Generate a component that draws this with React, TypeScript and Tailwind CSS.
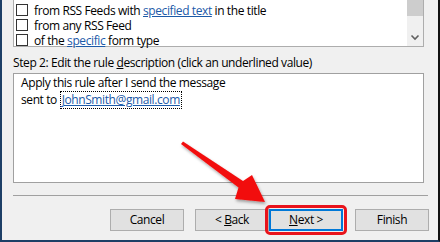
import React from 'react';

const font = { fontFamily: '"Open Sans", "Noto Sans", sans-serif' };

const conditions: { pre: string; link?: string; post?: string }[] = [
  { pre: 'from RSS Feeds with ', link: 'specified text', post: ' in the title' },
  { pre: 'from any RSS Feed' },
  { pre: 'of the ', link: 'specific', post: ' form type' },
];

const Btn = ({ children, focused }: { children: React.ReactNode; focused?: boolean }) => (
  <div
    className={
      'w-[74px] h-[22px] flex items-center justify-center bg-[#e1e1e1] text-[12px] text-black ' +
      (focused ? 'border-2 border-[#0078d7]' : 'border border-[#adadad]')
    }
  >
    {children}
  </div>
);

export default function App() {
  return (
    <div
      className="relative w-[440px] h-[242px] overflow-hidden bg-[#f0f0f0] border-l-2 border-b-2 border-l-[#1d3f66] border-b-[#1d3f66] border-r-2 border-r-[#111] flex flex-col tracking-[-0.4px]"
      style={font}
    >
      {/* Step 1 list (scrolled) */}
      <div className="ml-[11px] mr-[14px] h-[47px] bg-white border-x border-b border-[#adadad] flex">
        <div className="flex-1 flex flex-col pt-[2px]">
          {conditions.map((c, i) => (
            <div key={i} className="h-[15px] flex items-center text-[12px] text-black">
              <div className="w-[12px] h-[12px] ml-[2px] mr-[6px] border border-[#333] bg-white shrink-0" />
              <span className="block h-[15px] leading-[15px] translate-y-[1px]">
                {c.pre}
                {c.link && <span className="text-[#1c5aa8] underline">{c.link}</span>}
                {c.post}
              </span>
            </div>
          ))}
        </div>
        <div className="w-[16px] bg-[#f0f0f0] flex flex-col justify-between">
          <div className="h-[16px] bg-[#cdcdcd]" />
          <svg width="16" height="14" viewBox="0 0 16 14" className="mb-[1px]">
            <path d="M4.5 4.5 L8 8 L11.5 4.5" fill="none" stroke="#606060" strokeWidth="1.6" />
          </svg>
        </div>
      </div>

      {/* Step 2 */}
      <div className="ml-[11px] mt-[8px] text-[12px] text-black leading-[16px]">
        Step 2: Edit the rule <span className="underline">d</span>escription (click an underlined value)
      </div>
      <div className="ml-[11px] mr-[14px] mt-[2px] h-[110px] bg-white border border-[#a0a0a0] pl-[7px] pt-[1px] text-[12px] text-black leading-[16px]">
        <div>Apply this rule after I send the message</div>
        <div className="flex items-center">
          <span>sent to&nbsp;</span>
          <span className="border border-dotted border-black px-[1px] text-[#1c5aa8] underline">JohnSmith@gmail.com</span>
        </div>
      </div>

      <div className="ml-[11px] mr-[10px] mt-[12px] h-px bg-[#a0a0a0]" />

      {/* Buttons */}
      <div className="mt-[13px] mr-[9px] flex justify-end">
        <Btn>Cancel</Btn>
        <div className="ml-[11px]">
          <Btn>
            &lt;&nbsp;<span className="underline">B</span>ack
          </Btn>
        </div>
        <div className="relative">
          <Btn focused>
            <span className="underline">N</span>ext &gt;
          </Btn>
          <div className="absolute -left-[4px] -top-[4px] -right-[4px] -bottom-[4px] rounded-[5px] border-[3px] border-[#e8141c]" />
        </div>
        <div className="ml-[12px]">
          <Btn>Finish</Btn>
        </div>
      </div>

      {/* Annotation arrow */}
      <svg className="absolute left-0 top-0 pointer-events-none" width="440" height="242" viewBox="0 0 440 242">
        <defs>
          <filter id="sh" x="-20%" y="-20%" width="140%" height="140%">
            <feDropShadow dx="1" dy="2" stdDeviation="1.5" floodColor="#000" floodOpacity="0.35" />
          </filter>
        </defs>
        <polygon
          points="181,141.5 241,181 250,175 263,202 233,199 236.5,187.5 179,144"
          fill="#f20c0c"
          filter="url(#sh)"
        />
      </svg>
    </div>
  );
}
